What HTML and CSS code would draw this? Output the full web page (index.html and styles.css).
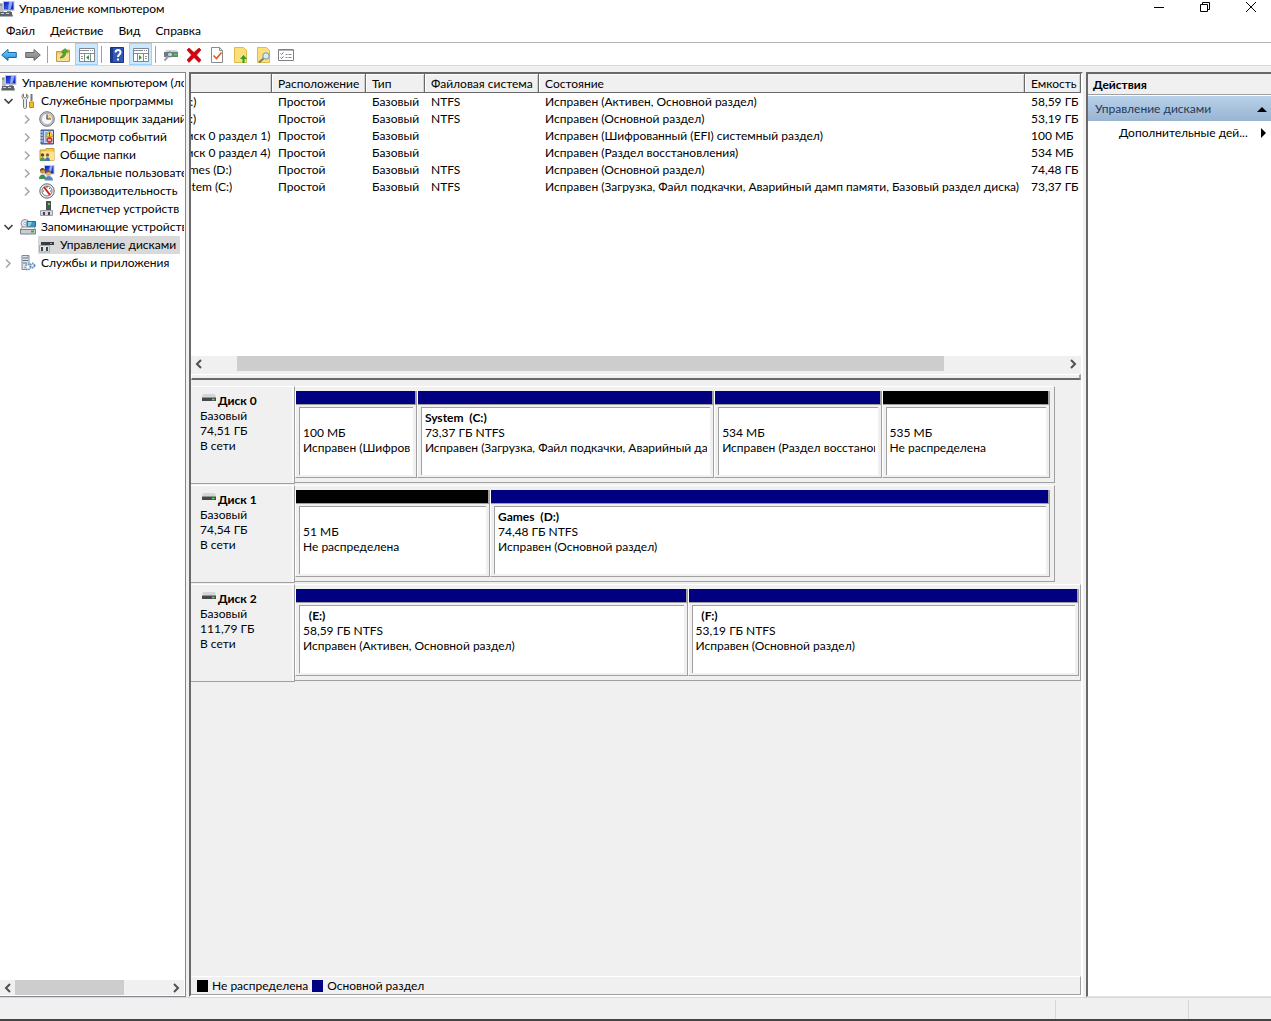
FILE: index.html
```html
<!DOCTYPE html>
<html lang="ru">
<head>
<meta charset="utf-8">
<title>Управление компьютером</title>
<link rel="stylesheet" href="styles.css">
</head>
<body>
<svg class="defs" aria-hidden="true">
  <defs>
    <linearGradient id="g-screen" x1="0" y1="0" x2="1" y2="1"><stop offset="0" stop-color="#0a1fae"/><stop offset=".5" stop-color="#2f50e0"/><stop offset="1" stop-color="#0c1c9c"/></linearGradient>
    <linearGradient id="g-back" x1="0" y1="0" x2="0" y2="1"><stop offset="0" stop-color="#7fd0f8"/><stop offset="1" stop-color="#1b8ad8"/></linearGradient>
    <linearGradient id="g-fwd" x1="0" y1="0" x2="0" y2="1"><stop offset="0" stop-color="#b0b0b0"/><stop offset="1" stop-color="#7c7c7c"/></linearGradient>
    <symbol id="i-computer" viewBox="0 0 16 16">
      <path d="M1 2h4v9H1z" fill="#b9bdc3"/><path d="M1 4h2" stroke="#666"/>
      <path d="M4 0h11.500v10H4z" fill="#c3c9d3"/><path d="M5 1h9.500v7.500H5z" fill="url(#g-screen)"/><path d="M10 1h3.500l-2 7.500H9z" fill="#8fa8fa"/>
      <path d="M8 10h4v2H8z" fill="#8e949c"/><path d="M1 11h12v1.500l1 3H0l1-3z" fill="#5d6369"/><path d="M2 12.500h3m2 0h3" stroke="#c9ccd0"/>
    </symbol>
    <symbol id="i-tools" viewBox="0 0 16 16">
      <path d="M3.500 1v3L5 5l1.500-1V1c2 1 2 4 0 5.500V14c0 2-3 2-3 0V6.500C1.500 5 1.500 2 3.500 1z" fill="#ececec" stroke="#777"/>
      <path d="M11.500 1v7" stroke="#777" stroke-width="2"/><path d="M9.500 9h4v5.500h-4z" fill="#f6bd2b" stroke="#c18a12"/>
    </symbol>
    <symbol id="i-clock" viewBox="0 0 16 16">
      <circle cx="8" cy="8" r="7.300" fill="#c4c4c4" stroke="#777"/><circle cx="8" cy="8" r="5.500" fill="#f4f7fb" stroke="#999" stroke-width=".6"/>
      <path d="M8 8V3a5 5 0 0 1 4.600 5z" fill="#f5d08a"/><path d="M8 3.500V8h4" fill="none" stroke="#4a4a5a" stroke-width="1.200"/>
    </symbol>
    <symbol id="i-events" viewBox="0 0 16 16">
      <path d="M2 1h12.500v14H2z" fill="#5a7ec0" stroke="#35548f"/><path d="M5 2h9v12H5z" fill="#cddcf3"/><path d="M6 4h3M6 6h2M6 8h2M6 10h2M6 12h2" stroke="#6b87b8"/>
      <path d="M1 3h3M1 6h3M1 9h3M1 12h3" stroke="#dfe5ee"/><path d="M10.500 1.500L14 7.500H7z" fill="#ffd83b" stroke="#b58500" stroke-width=".6"/><path d="M10.500 3.500v2.200m0 .6v.8" stroke="#222"/>
      <circle cx="10.500" cy="11" r="3" fill="#d93434"/><path d="M9 11h3" stroke="#fff" stroke-width="1.200"/>
    </symbol>
    <symbol id="i-shared" viewBox="0 0 16 16">
      <path d="M1 3h5l1-1.500h8v12H1z" fill="#f1c655" stroke="#c59a35"/><path d="M2 4.500h13v9H2z" fill="#ffe38f"/>
      <circle cx="3.500" cy="8" r="1.700" fill="#60412c"/><circle cx="8.500" cy="8" r="1.700" fill="#8a5a38"/><path d="M1 14c0-5 5-5 5 0z" fill="#3d9a67"/><path d="M6 14c0-5 5-5 5 0z" fill="#3d78bd"/>
    </symbol>
    <symbol id="i-users" viewBox="0 0 16 16">
      <path d="M5 0h10.500v9.500H5z" fill="#c3c9d3"/><path d="M6 1h8.500v7.500H6z" fill="url(#g-screen)"/><path d="M11 1h2.500l-2 7.500H9z" fill="#8fa8fa"/>
      <circle cx="3.500" cy="6" r="2.600" fill="#c99258"/><path d="M1 6c0-4 5-4 5 0L4.500 4.500z" fill="#5e4122"/><path d="M0 14c0-6 7-6 7 0z" fill="#3d8e57"/>
      <circle cx="9.500" cy="8.500" r="2.600" fill="#e0b283"/><path d="M7 8c0-4 5-3 5 0L9.500 7z" fill="#7a5427"/><path d="M5.500 15.500c0-6 8.500-6 8.500 0z" fill="#5c84c6"/>
    </symbol>
    <symbol id="i-perf" viewBox="0 0 16 16">
      <circle cx="8" cy="8" r="7.200" fill="#ededed" stroke="#666"/><circle cx="8" cy="8" r="5" fill="#fff" stroke="#777"/><path d="M5 4l6 8" stroke="#d51f1f" stroke-width="2"/><path d="M8 3v2m3 0l-1 1M4 8h1m6 0h1" stroke="#555"/>
    </symbol>
    <symbol id="i-device" viewBox="0 0 16 16">
      <path d="M7 0h5v9H7z" fill="#4d5155"/><path d="M9 2h2v2H9z" fill="#4ae04a"/><path d="M1.500 9.500h12v5h-12z" fill="#d3d6da" stroke="#9a9fa5"/><path d="M4 11h2v3H4zM9 11h2v3H9z" fill="#44484d"/>
    </symbol>
    <symbol id="i-storage" viewBox="0 0 16 16">
      <circle cx="5" cy="4.500" r="4" fill="#e4e8ed" stroke="#8c939b"/><circle cx="5" cy="4.500" r="1.200" fill="#fff" stroke="#8c939b" stroke-width=".6"/>
      <path d="M7 2.500h8.500v5H7z" fill="#2d9bd0" stroke="#23709a"/><path d="M8 3h4l-2 4H8z" fill="#85d4f2"/>
      <path d="M2 8h12l1.500 2.500H.5z" fill="#f0f1f3" stroke="#999"/><path d="M.5 10.500h15V15H.5z" fill="#c9ccd0" stroke="#7d8288"/><path d="M11 12.500h3" stroke="#22b832" stroke-width="2"/>
    </symbol>
    <symbol id="i-diskmgmt" viewBox="0 0 16 16">
      <path d="M4 3h9l2 2H2z" fill="#d5d8dc"/><path d="M2 5h13v3H2z" fill="#3a3d40"/><path d="M11 6.500h2" stroke="#4be04b"/><path d="M.5 8.500h10V15H.5z" fill="#e0e2e5" stroke="#a5a9af"/><path d="M2 10h2v4H2zm5 0h2v4H7z" fill="#3f4347"/>
    </symbol>
    <symbol id="i-services" viewBox="0 0 16 16">
      <path d="M2 .5h7v14H2z" fill="#dce3ea" stroke="#7c8894"/><path d="M3 3h5M3 5.500h5M3 8h4" stroke="#687683"/><path d="M7 2h1" stroke="#3ecb48"/>
      <circle cx="8" cy="12" r="2.600" fill="#fff" stroke="#829cb5" stroke-width="2" stroke-dasharray="1.500 .8"/><circle cx="12.500" cy="10.500" r="2" fill="#fff" stroke="#5f8fc0" stroke-width="2" stroke-dasharray="1.300 .7"/>
    </symbol>
    <symbol id="i-drive" viewBox="0 0 16 16">
      <path d="M3 1h12l1 3.500H2z" fill="#d4d7da"/><path d="M2 4.500h14v3.500H2z" fill="#45484c"/><path d="M12 6.500h2.500" stroke="#4bf04b" stroke-width="1.500"/>
    </symbol>
    <symbol id="i-left" viewBox="0 0 16 16"><path d="M10 4L6 8l4 4" fill="none" stroke="#505050" stroke-width="2"/></symbol>
    <symbol id="i-right" viewBox="0 0 16 16"><path d="M5 4l4 4-4 4" fill="none" stroke="#505050" stroke-width="2"/></symbol>
    <symbol id="i-closed" viewBox="0 0 16 16"><path d="M6 4.500l4 4-4 4" fill="none" stroke="#a6a6a6" stroke-width="1.500"/></symbol>
    <symbol id="i-open" viewBox="0 0 16 16"><path d="M4.500 6l4 4 4-4" fill="none" stroke="#404040" stroke-width="1.600"/></symbol>
  </defs>
</svg>

<header class="titlebar">
  <svg class="icon"><use href="#i-computer"/></svg>
  <h1>Управление компьютером</h1>
  <div class="caption">
    <button aria-label="Свернуть"><svg viewBox="0 0 12 12"><path d="M1 6.500h10" stroke="#000"/></svg></button>
    <button aria-label="Восстановить"><svg viewBox="0 0 12 12"><path d="M1.500 3.500h7v7h-7zM3.500 3V1.500h7v7H9" fill="none" stroke="#000"/></svg></button>
    <button aria-label="Закрыть"><svg viewBox="0 0 12 12"><path d="M1 1l10 10M11 1L1 11" stroke="#000"/></svg></button>
  </div>
</header>

<nav class="menu">
  <button>Файл</button><button>Действие</button><button>Вид</button><button>Справка</button>
</nav>

<div class="toolbar">
  <div class="tools spaced">
    <button aria-label="Назад"><svg viewBox="0 0 16 16"><path d="M.7 8L7 2.500v3h8.300v5H7v3z" fill="url(#g-back)" stroke="#1769a8"/></svg></button>
    <button aria-label="Вперед"><svg viewBox="0 0 16 16"><path d="M15.300 8L9 2.500v3H.7v5H9v3z" fill="url(#g-fwd)" stroke="#666"/></svg></button>
  </div>
  <div class="tools spaced">
    <button aria-label="На уровень вверх"><svg viewBox="0 0 16 16"><path d="M1.500 4.500h5l1-1.500h7v11.500h-13z" fill="#f0cb6b" stroke="#c49b3c"/><path d="M2 7h12v7H2z" fill="#f8dd92"/><path d="M5 11c1-2 3-2 3.500-5.500H6.500L10 1.500 13.500 5H11c-.3 4-2 6-6 6z" fill="#48b02c" stroke="#2f8218" stroke-width=".6"/></svg></button>
    <button class="on" aria-label="Дерево консоли"><svg viewBox="0 0 16 16"><path d="M.5 1.500h15v13H.5z" fill="#fff" stroke="#7f858c"/><path d="M1 3.500h9m1 0h1m1 0h1M1 6.500h14M5.500 7v7M11.500 7v7" stroke="#858b92"/><path d="M2 9.500h2m-2 2h2" stroke="#8e949a"/><path d="M10 8v5L7 10.500z" fill="#35a035"/></svg></button>
  </div>
  <div class="tools spaced">
    <button aria-label="Справка"><svg viewBox="0 0 16 16"><path d="M1.500.5h13v15h-13z" fill="#3157b8" stroke="#1c3478"/><path d="M2 1h2v14H2z" fill="#1d3a8c"/><path d="M6.500 5.500c0-3.500 5.500-3 5 0-.3 2-2.500 2-2.500 4.500" fill="none" stroke="#fff" stroke-width="2"/><path d="M8 11.500h2v2H8z" fill="#fff"/></svg></button>
    <button class="on" aria-label="Панель действий"><svg viewBox="0 0 16 16"><path d="M.5 1.500h15v13H.5z" fill="#fff" stroke="#7f858c"/><path d="M1 3.500h9m1 0h1m1 0h1M1 6.500h14M4.500 7v7M10.500 7v7" stroke="#858b92"/><path d="M12 9.500h2m-2 2h2" stroke="#8e949a"/><path d="M6 8v5l3-2.500z" fill="#35a035"/></svg></button>
  </div>
  <div class="tools">
    <button aria-label="Подключить"><svg viewBox="0 0 16 16"><path d="M3 3h11l1 2H2z" fill="#d0d4d8"/><path d="M1 5h14v5H1z" fill="#6f7a84"/><path d="M11 7.500h3" stroke="#4be04b" stroke-width="1.500"/><circle cx="7" cy="7.500" r="2.500" fill="#b9d7e8" stroke="#666"/><path d="M5 9.500l-3.500 4" stroke="#9a9fa5" stroke-width="2"/></svg></button>
    <button aria-label="Удалить"><svg viewBox="0 0 16 16"><path d="M3 1l5 4.500L13 1l2 2-4.500 5 4.500 5-2 2.500-5-5-5 5L1 13l4.500-5L1 3z" fill="#d8000c" stroke="#a80008" stroke-width=".6"/></svg></button>
    <button aria-label="Свойства"><svg viewBox="0 0 16 16"><path d="M2.500.5h8l3 3v12h-11z" fill="#fff" stroke="#8a8a8a"/><path d="M10.500.5v3h3" fill="none" stroke="#8a8a8a"/><path d="M4.500 8.500l3 3 5-6" fill="none" stroke="#e2581d" stroke-width="1.600"/></svg></button>
    <button aria-label="Открыть"><svg viewBox="0 0 16 16"><path d="M2.500.5h9l3 3v12h-12z" fill="#fbdf7b" stroke="#e0bb4c"/><path d="M10.500 16v-4H8l3.500-4 3.500 4h-2.500v4z" fill="#26a22a"/></svg></button>
    <button aria-label="Обзор"><svg viewBox="0 0 16 16"><path d="M2.500.5h9l3 3v12h-12z" fill="#fbdf7b" stroke="#e0bb4c"/><path d="M9 11l-5 4.500" stroke="#777" stroke-width="1.800"/><circle cx="11" cy="9" r="3.200" fill="#d3ecfa" stroke="#7794a8"/></svg></button>
    <button aria-label="Параметры"><svg viewBox="0 0 16 16"><path d="M.5 2.500h15v11H.5z" fill="#fff" stroke="#7d8186"/><path d="M1 3.500h14" stroke="#b4b8bc"/><path d="M2.500 6.500l1 1 2-2m-3 5l1 1 2-2" fill="none" stroke="#2b7bc8"/><path d="M7.500 7.500h2m1 0h3m-6 3h2m1 0h3" stroke="#888"/></svg></button>
  </div>
</div>

<main class="workspace">
  <aside class="tree-pane">
    <ul class="tree">
      <li class="root"><svg class="icon"><use href="#i-computer"/></svg><span>Управление компьютером (локальный)</span></li>
      <li><svg class="icon"><use href="#i-open"/></svg><svg class="icon"><use href="#i-tools"/></svg><span>Служебные программы</span></li>
      <li class="child"><svg class="icon"><use href="#i-closed"/></svg><svg class="icon"><use href="#i-clock"/></svg><span>Планировщик заданий</span></li>
      <li class="child"><svg class="icon"><use href="#i-closed"/></svg><svg class="icon"><use href="#i-events"/></svg><span>Просмотр событий</span></li>
      <li class="child"><svg class="icon"><use href="#i-closed"/></svg><svg class="icon"><use href="#i-shared"/></svg><span>Общие папки</span></li>
      <li class="child"><svg class="icon"><use href="#i-closed"/></svg><svg class="icon"><use href="#i-users"/></svg><span>Локальные пользователи</span></li>
      <li class="child"><svg class="icon"><use href="#i-closed"/></svg><svg class="icon"><use href="#i-perf"/></svg><span>Производительность</span></li>
      <li class="child leaf"><svg class="icon"><use href="#i-device"/></svg><span>Диспетчер устройств</span></li>
      <li><svg class="icon"><use href="#i-open"/></svg><svg class="icon"><use href="#i-storage"/></svg><span>Запоминающие устройства</span></li>
      <li class="child leaf selected"><svg class="icon"><use href="#i-diskmgmt"/></svg><span>Управление дисками</span></li>
      <li><svg class="icon"><use href="#i-closed"/></svg><svg class="icon"><use href="#i-services"/></svg><span>Службы и приложения</span></li>
    </ul>
    <div class="scroll">
      <button aria-label="Прокрутить влево"><svg><use href="#i-left"/></svg></button>
      <div class="track"><div class="thumb" style="width:71%"></div></div>
      <button aria-label="Прокрутить вправо"><svg><use href="#i-right"/></svg></button>
    </div>
  </aside>

  <section class="center-pane">
    <div class="volumes">
      <table>
        <colgroup><col class="c-vol"><col class="c-place"><col class="c-type"><col class="c-fs"><col><col class="c-size"></colgroup>
        <thead><tr><th></th><th>Расположение</th><th>Тип</th><th>Файловая система</th><th>Состояние</th><th>Емкость</th></tr></thead>
        <tbody>
          <tr><td>&nbsp; (E:)</td><td>Простой</td><td>Базовый</td><td>NTFS</td><td>Исправен (Активен, Основной раздел)</td><td>58,59 ГБ</td></tr>
          <tr><td>&nbsp; (F:)</td><td>Простой</td><td>Базовый</td><td>NTFS</td><td>Исправен (Основной раздел)</td><td>53,19 ГБ</td></tr>
          <tr><td>(Диск 0 раздел 1)</td><td>Простой</td><td>Базовый</td><td></td><td>Исправен (Шифрованный (EFI) системный раздел)</td><td>100 МБ</td></tr>
          <tr><td>(Диск 0 раздел 4)</td><td>Простой</td><td>Базовый</td><td></td><td>Исправен (Раздел восстановления)</td><td>534 МБ</td></tr>
          <tr><td>Games (D:)</td><td>Простой</td><td>Базовый</td><td>NTFS</td><td>Исправен (Основной раздел)</td><td>74,48 ГБ</td></tr>
          <tr><td>System (C:)</td><td>Простой</td><td>Базовый</td><td>NTFS</td><td>Исправен (Загрузка, Файл подкачки, Аварийный дамп памяти, Базовый раздел диска)</td><td>73,37 ГБ</td></tr>
        </tbody>
      </table>
    </div>
    <div class="scroll wide">
      <button aria-label="Прокрутить влево"><svg><use href="#i-left"/></svg></button>
      <div class="track"><div class="thumb" style="width:82.200%;margin-left:3.600%"></div></div>
      <button aria-label="Прокрутить вправо"><svg><use href="#i-right"/></svg></button>
    </div>
    <div class="splitter"></div>

    <div class="disks">
      <article class="disk">
        <div class="info"><h2><svg class="icon"><use href="#i-drive"/></svg>Диск 0</h2><p>Базовый</p><p>74,51 ГБ</p><p>В сети</p></div>
        <div class="lane"><div class="parts" style="width:96.700%">
          <div class="part" style="flex-grow:121"><div class="bar"></div><div class="box"><h3></h3><p>100 МБ</p><p>Исправен (Шифрованный (EFI) системный раздел)</p></div></div>
          <div class="part" style="flex-grow:298"><div class="bar"></div><div class="box"><h3>System&nbsp; (C:)</h3><p>73,37 ГБ NTFS</p><p>Исправен (Загрузка, Файл подкачки, Аварийный дамп памяти, Базовый раздел диска)</p></div></div>
          <div class="part" style="flex-grow:167"><div class="bar"></div><div class="box"><h3></h3><p>534 МБ</p><p>Исправен (Раздел восстановления)</p></div></div>
          <div class="part free" style="flex-grow:168"><div class="bar"></div><div class="box"><h3></h3><p>535 МБ</p><p>Не распределена</p></div></div>
        </div></div>
      </article>
      <article class="disk">
        <div class="info"><h2><svg class="icon"><use href="#i-drive"/></svg>Диск 1</h2><p>Базовый</p><p>74,54 ГБ</p><p>В сети</p></div>
        <div class="lane"><div class="parts" style="width:96.700%">
          <div class="part free" style="flex-grow:194"><div class="bar"></div><div class="box"><h3></h3><p>51 МБ</p><p>Не распределена</p></div></div>
          <div class="part" style="flex-grow:561"><div class="bar"></div><div class="box"><h3>Games&nbsp; (D:)</h3><p>74,48 ГБ NTFS</p><p>Исправен (Основной раздел)</p></div></div>
        </div></div>
      </article>
      <article class="disk">
        <div class="info"><h2><svg class="icon"><use href="#i-drive"/></svg>Диск 2</h2><p>Базовый</p><p>111,79 ГБ</p><p>В сети</p></div>
        <div class="lane"><div class="parts full" style="width:100%">
          <div class="part" style="flex-grow:392"><div class="bar"></div><div class="box"><h3>&nbsp; (E:)</h3><p>58,59 ГБ NTFS</p><p>Исправен (Активен, Основной раздел)</p></div></div>
          <div class="part" style="flex-grow:391"><div class="bar"></div><div class="box"><h3>&nbsp; (F:)</h3><p>53,19 ГБ NTFS</p><p>Исправен (Основной раздел)</p></div></div>
        </div></div>
      </article>
    </div>

    <div class="legend">
      <span class="swatch free"></span><span>Не распределена</span>
      <span class="swatch"></span><span>Основной раздел</span>
    </div>
  </section>

  <aside class="actions-pane">
    <h2>Действия</h2>
    <button class="group"><span>Управление дисками</span><svg viewBox="0 0 10 10"><path d="M0 8l5-5 5 5z"/></svg></button>
    <button class="action"><span>Дополнительные дей...</span><svg viewBox="0 0 10 10"><path d="M4 0l5 5-5 5z"/></svg></button>
  </aside>
</main>

<footer class="status"><div></div><div></div><div></div></footer>
<div class="desk"></div>
</body>
</html>
```
FILE: styles.css
```css
* { box-sizing: border-box; }

body {
  margin: 0;
  height: 100vh;
  display: flex;
  flex-direction: column;
  overflow: hidden;
  background: #f0f0f0;
  color: #000;
  font: 12px/15px Lato, "Open Sans", sans-serif;
}

h1, h2, h3, p, ul { margin: 0; padding: 0; font: inherit; }
ul { list-style: none; }
button { border: 0; padding: 0; background: none; color: inherit; font: inherit; }
svg { display: block; }
.defs { position: absolute; width: 0; height: 0; }
.icon { width: 16px; height: 16px; flex: none; }

/* Title bar */
.titlebar { display: flex; align-items: center; height: 18px; background: #fff; }
.titlebar .icon { margin: 0 4px 0 -1px; }
.titlebar h1 { flex: 1; padding-bottom: 2px; }
.caption { display: flex; margin-right: -3px; }
.caption button { width: 46px; height: 18px; display: grid; place-items: center; padding-bottom: 4px; }
.caption svg { width: 12px; height: 12px; }

/* Menu and toolbar */
.menu { display: flex; gap: 15px; height: 25px; padding: 0 6px; background: #fff; border-bottom: 1px solid #b4b4b4; }
.toolbar { display: flex; height: 23px; margin-left: -3px; background: #fff; border-bottom: 1px solid #d9d9d9; }
.tools { display: flex; }
.tools.spaced { gap: 1px; }
.tools + .tools { margin-left: 3px; padding-left: 4px; background: linear-gradient(#a0a0a0, #a0a0a0) 0 3px / 1px 17px no-repeat; }
.tools button { width: 23px; height: 22px; display: grid; place-items: center; padding-top: 2px; }
.tools .on { background: #cce8ff; border: 1px solid #99d1ff; }
.tools svg { width: 16px; height: 16px; }

/* Work area */
.workspace { flex: 1; min-height: 0; display: flex; margin-top: 6px; }

.tree-pane {
  width: 186px;
  flex: none;
  display: flex;
  flex-direction: column;
  overflow: hidden;
  background: #fff;
  border: 1px solid #828790;
  border-left: 0;
  padding: 1px 1px 1px 0;
}
.tree { flex: 1; overflow: hidden; }
.tree li { display: flex; align-items: center; height: 18px; white-space: nowrap; }
.tree li > .icon + .icon { margin-left: 4px; }
.tree li span { padding: 0 4px 1px 5px; }
.tree .root { padding-left: 1px; }
.tree .child { padding-left: 19px; }
.tree .leaf { padding-left: 39px; }
.tree .selected { width: 180px; background: linear-gradient(#d9d9d9, #d9d9d9) 38px 0 no-repeat; }

.scroll { display: flex; height: 15px; flex: none; background: #f0f0f0; }
.scroll button { width: 15px; height: 15px; flex: none; }
.scroll svg { width: 16px; height: 16px; }
.track { flex: 1; }
.thumb { height: 15px; background: #cdcdcd; }

.center-pane {
  flex: 1;
  min-width: 0;
  display: flex;
  flex-direction: column;
  margin: 0 3px;
  border-style: solid;
  border-width: 2px;
  border-color: #696969 #fff #fff #696969;
}

/* Volume list, scrolled a little to the right */
.volumes { height: 282px; flex: none; overflow: hidden; background: #fff; }
.volumes table { width: calc(100% + 36px); margin-left: -36px; table-layout: fixed; border-collapse: separate; border-spacing: 0; }
.c-vol { width: 117px; }
.c-place { width: 94px; }
.c-type { width: 59px; }
.c-fs { width: 114px; }
.c-size { width: 56px; }
th, td { padding: 0 0 0 6px; text-align: left; font-weight: 400; white-space: nowrap; }
th { height: 19px; background: #f0f0f0; border-right: 1px solid #696969; border-bottom: 1px solid #696969; box-shadow: inset 1px 1px #fff, inset -1px 0 #d0d0d0; }
td { height: 17px; }
td:first-child { padding-left: 19px; }

.splitter { height: 6px; flex: none; margin: 3px 0 6px; border: 1px solid #fff; border-bottom: 2px solid #696969; border-right: 2px solid #a0a0a0; }

/* Disk map */
.disks { flex: 1; min-height: 0; }
.disk { display: flex; height: 99px; }
.info { width: 104px; height: 98px; flex: none; padding: 6px 9px; border-top: 1px solid #fff; border-right: 1px solid #a0a0a0; border-bottom: 1px solid #a0a0a0; box-shadow: inset -2px 0 #f8f8f8; }
.info h2 { display: flex; height: 15px; font-weight: 700; }
.info h2 .icon { margin-right: 2px; }
.lane { flex: 1; min-width: 0; padding-bottom: 2px; }
.parts { display: flex; height: 97px; padding: 4px 4px 4px 0; border: 1px solid #a0a0a0; border-width: 0 1px 1px 0; border-top: 1px solid #fff; }
.parts.full { padding-right: 1px; }
.part { flex: 1 1 0; min-width: 0; display: flex; flex-direction: column; border-left: 1px solid #fff; border-right: 1px solid #a0a0a0; border-bottom: 1px solid #a0a0a0; }
.bar { height: 14px; background: #000080; border-bottom: 1px solid #a0a0a0; border-right: 1px solid #a0a0a0; }
.free .bar { background: #000; }
.box { flex: 1; margin: 2px 3px; padding: 2px 3px 0 3px; background: #fff; border: 1px solid #a0a0a0; border-width: 1px 0 0 1px; overflow: hidden; white-space: nowrap; }
.box h3 { height: 15px; font-weight: 700; }
.box p { overflow: hidden; }

.legend { display: flex; align-items: center; gap: 4px; height: 19px; flex: none; padding-left: 6px; border-top: 1px solid #fff; border-right: 1px solid #a0a0a0; border-bottom: 1px solid #a0a0a0; }
.swatch { width: 11px; height: 12px; background: #000080; }
.swatch.free { background: #000; }

/* Actions */
.actions-pane { width: 185px; flex: none; background: #fff; border: 2px solid #696969; border-width: 2px 0 1px 2px; border-bottom-color: #e3e3e3; }
.actions-pane h2 { height: 21px; padding: 3px 5px; background: #f0f0f0; border-bottom: 1px solid #a0a0a0; font-weight: 700; }
.actions-pane button { width: 100%; display: flex; align-items: center; justify-content: space-between; padding: 0 4px 0 7px; }
.actions-pane .group { height: 25px; margin-top: 1px; background: linear-gradient(#b9d1ea, #99b4d1); color: #1e395b; }
.actions-pane .action { height: 23px; padding-left: 31px; }
.actions-pane svg { width: 10px; height: 10px; flex: none; fill: #000; }

/* Status bar */
.status { display: flex; height: 22px; flex: none; border-top: 1px solid #d7d7d7; }
.status div:first-child { flex: 1; }
.status div + div { width: 133px; margin-top: 2px; border-left: 1px solid #d7d7d7; }
.status div:last-child { width: 83px; }
.desk { height: 2px; flex: none; background: #444; }
```
